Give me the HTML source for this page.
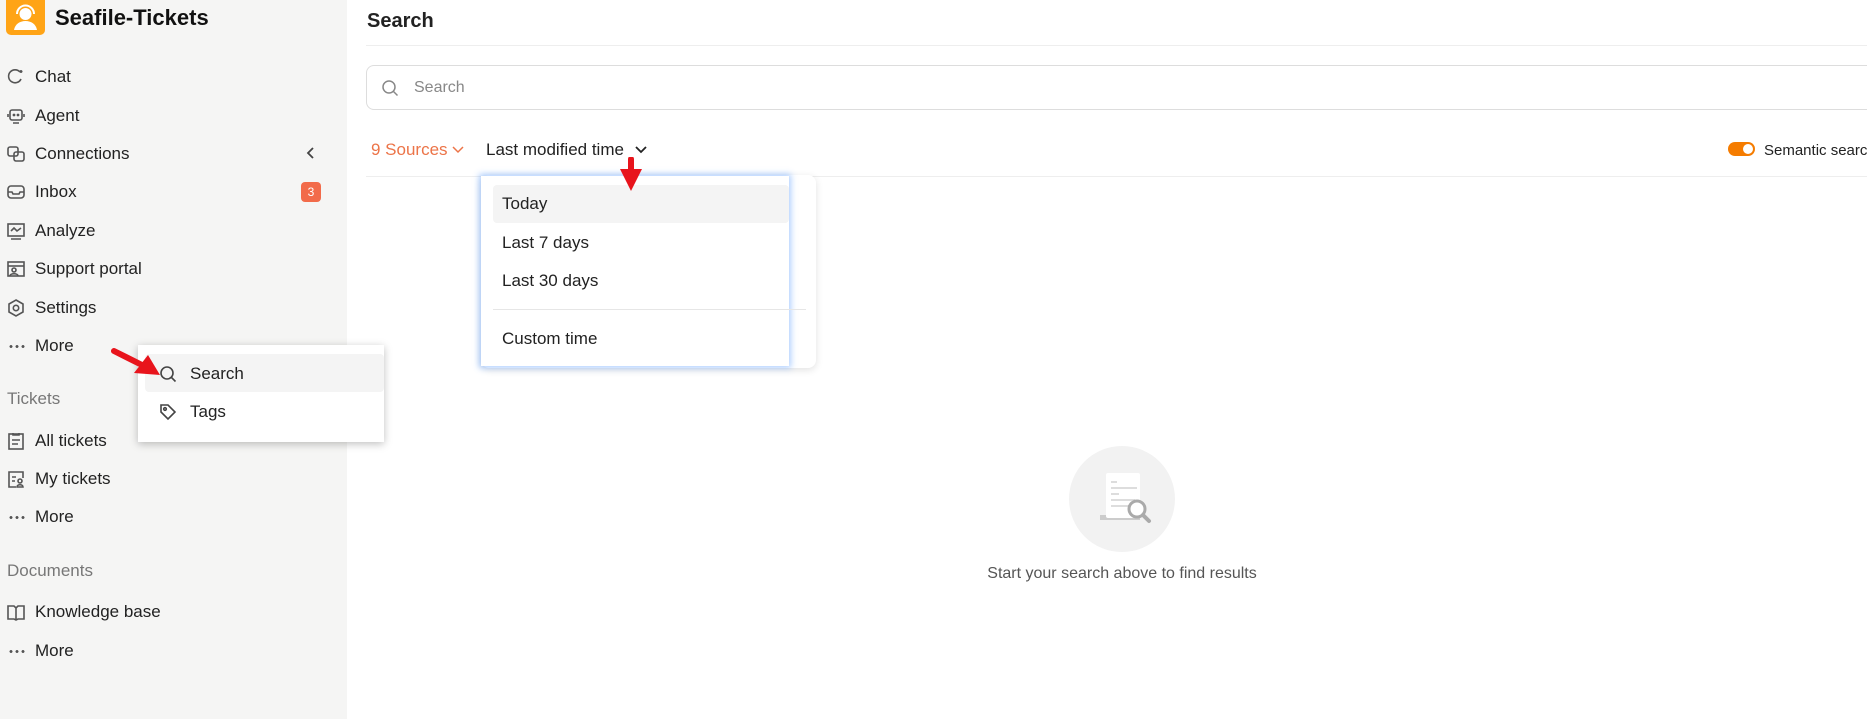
<!DOCTYPE html>
<html><head><meta charset="utf-8"><style>
*{box-sizing:border-box;margin:0;padding:0}
body{width:1867px;height:719px;overflow:hidden;background:#fff;font-family:"Liberation Sans",sans-serif;color:#212529;position:relative}
.side{position:absolute;left:0;top:0;width:347px;height:719px;background:#f5f5f4}
.abs{position:absolute}
.nav{position:absolute;left:0;font-size:17px;color:#222;height:30px;line-height:30px;width:330px}
.nav svg{position:absolute;left:7px;top:6px}
.nav span{position:absolute;left:35px}
.hdr{position:absolute;left:7px;font-size:17px;color:#777}
.dots{position:absolute;left:8px;top:14px;width:18px;height:3px;background:radial-gradient(circle,#555 1.3px,transparent 1.6px) 0 0/6px 3px repeat-x}
.item{position:absolute;font-size:17px;color:#222}
</style></head><body>
<div class="side">
 <div class="abs" style="left:6px;top:0;width:39px;height:35px;background:#ffa416;border-radius:0 0 5px 5px">
  <svg width="39" height="35" viewBox="0 0 39 35"><circle cx="19.5" cy="14" r="6" fill="#fff"/><path d="M11 14a8.5 8.5 0 0 1 17 0" stroke="#fff" stroke-width="2" fill="none"/><path d="M8 30c1-6 6-9 11.5-9s10.5 3 11.5 9z" fill="#fff"/></svg>
 </div>
 <div class="abs" style="left:55px;top:5px;font-size:22px;font-weight:bold;color:#111">Seafile-Tickets</div>

 <div class="nav" style="top:62px"><svg width="18" height="18" viewBox="0 0 18 18" fill="none" stroke="#555" stroke-width="1.6"><path d="M14 11a6.5 6.5 0 1 1-1-7"/><path d="M14 2v3M12.5 3.5h3"/></svg><span>Chat</span></div>
 <div class="nav" style="top:101px"><svg width="18" height="18" viewBox="0 0 18 18" fill="none" stroke="#555" stroke-width="1.6"><rect x="3" y="3" width="12" height="10" rx="2"/><path d="M1 7v3M17 7v3M6 16h6"/><circle cx="7" cy="8" r=".6" fill="#555"/><circle cx="11" cy="8" r=".6" fill="#555"/></svg><span>Agent</span></div>
 <div class="nav" style="top:139px"><svg width="18" height="18" viewBox="0 0 18 18" fill="none" stroke="#555" stroke-width="1.6"><rect x="1" y="2" width="10" height="9" rx="2"/><rect x="7" y="7" width="10" height="9" rx="2"/></svg><span>Connections</span></div>
 <svg class="abs" style="left:305px;top:146px" width="12" height="14" viewBox="0 0 12 14"><path d="M8 2L3 7l5 5" stroke="#444" stroke-width="1.8" fill="none"/></svg>
 <div class="nav" style="top:177px"><svg width="18" height="18" viewBox="0 0 18 18" fill="none" stroke="#555" stroke-width="1.6"><rect x="1" y="3" width="16" height="12" rx="3"/><path d="M1 9h4l1 2h6l1-2h4"/></svg><span>Inbox</span></div>
 <div class="abs" style="left:301px;top:182px;width:20px;height:20px;background:#f26b4a;border-radius:4px;color:#fff;font-size:12px;text-align:center;line-height:20px">3</div>
 <div class="nav" style="top:216px"><svg width="18" height="18" viewBox="0 0 18 18" fill="none" stroke="#555" stroke-width="1.6"><rect x="1" y="2" width="16" height="12"/><path d="M4 9l3-3 3 3 4-3M4 17h10"/></svg><span>Analyze</span></div>
 <div class="nav" style="top:254px"><svg width="18" height="18" viewBox="0 0 18 18" fill="none" stroke="#555" stroke-width="1.6"><rect x="1" y="2" width="16" height="14"/><path d="M1 6h16"/><circle cx="7" cy="10" r="2"/><path d="M3 16c0-3 8-3 8 0"/></svg><span>Support portal</span></div>
 <div class="nav" style="top:293px"><svg width="18" height="18" viewBox="0 0 18 18" fill="none" stroke="#555" stroke-width="1.6"><path d="M9 1l7 4v8l-7 4-7-4V5z"/><circle cx="9" cy="9" r="2.7"/></svg><span>Settings</span></div>
 <div class="nav" style="top:331px"><i class="dots"></i><span>More</span></div>

 <div class="hdr" style="top:389px">Tickets</div>
 <div class="nav" style="top:426px"><svg width="18" height="18" viewBox="0 0 18 18" fill="none" stroke="#555" stroke-width="1.6"><rect x="2" y="2" width="14" height="15"/><path d="M6 1v2h6V1M5 8h8M5 12h6"/></svg><span>All tickets</span></div>
 <div class="nav" style="top:464px"><svg width="18" height="18" viewBox="0 0 18 18" fill="none" stroke="#555" stroke-width="1.6"><path d="M9 17H2V2h14v6"/><path d="M5 7h4M5 11h3"/><circle cx="13" cy="11" r="2"/><path d="M10 17c0-3 6-3 6 0z"/></svg><span>My tickets</span></div>
 <div class="nav" style="top:502px"><i class="dots"></i><span>More</span></div>

 <div class="hdr" style="top:561px">Documents</div>
 <div class="nav" style="top:597px"><svg width="18" height="18" viewBox="0 0 18 18" fill="none" stroke="#555" stroke-width="1.6"><path d="M1 3h6l2 2 2-2h6v13h-6l-2 1-2-1H1zM9 5v12"/></svg><span>Knowledge base</span></div>
 <div class="nav" style="top:636px"><i class="dots"></i><span>More</span></div>
</div>

<!-- popup -->
<div class="abs" style="left:138px;top:345px;width:246px;height:97px;background:#fff;box-shadow:0 2px 8px rgba(0,0,0,.25)">
 <div class="abs" style="left:7px;top:9px;width:239px;height:38px;background:#f4f4f4;border-radius:4px"></div>
 <svg class="abs" style="left:21px;top:20px" width="18" height="18" viewBox="0 0 18 18" fill="none" stroke="#444" stroke-width="1.6"><circle cx="8" cy="8" r="6"/><path d="M12.5 12.5l4 4"/></svg>
 <div class="item" style="left:52px;top:19px">Search</div>
 <svg class="abs" style="left:21px;top:58px" width="18" height="18" viewBox="0 0 18 18" fill="none" stroke="#444" stroke-width="1.6"><path d="M2 2h7l7 7-7 7-7-7z"/><circle cx="6" cy="6" r="1.3"/></svg>
 <div class="item" style="left:52px;top:57px">Tags</div>
</div>
<svg class="abs" style="left:108px;top:343px" width="60" height="40" viewBox="0 0 60 40"><path d="M6 8L38 24" stroke="#e8141c" stroke-width="6" stroke-linecap="round"/><path d="M52 32L26 30 40 12z" fill="#e8141c"/></svg>

<!-- main -->
<div class="abs" style="left:367px;top:10px;font-size:20px;font-weight:bold;color:#222">Search</div>
<div class="abs" style="left:366px;top:45px;width:1501px;height:1px;background:#eee"></div>
<div class="abs" style="left:366px;top:65px;width:1520px;height:45px;border:1px solid #ddd;border-radius:8px"></div>
<svg class="abs" style="left:381px;top:79px" width="18" height="18" viewBox="0 0 18 18" fill="none" stroke="#888" stroke-width="1.5"><circle cx="8" cy="8" r="6"/><path d="M12.5 12.5l4 4"/></svg>
<div class="abs" style="left:414px;top:79px;font-size:16px;color:#888">Search</div>

<div class="abs" style="left:371px;top:140px;font-size:17px;color:#ec7448">9 Sources</div>
<svg class="abs" style="left:451px;top:145px" width="14" height="10" viewBox="0 0 14 10"><path d="M2 2l5 5 5-5" stroke="#ec7448" stroke-width="1.5" fill="none"/></svg>
<div class="abs" style="left:486px;top:140px;font-size:17px;color:#222">Last modified time</div>
<svg class="abs" style="left:634px;top:145px" width="14" height="10" viewBox="0 0 14 10"><path d="M2 2l5 5 5-5" stroke="#222" stroke-width="1.8" fill="none"/></svg>
<div class="abs" style="left:366px;top:176px;width:1501px;height:1px;background:#eee"></div>

<div class="abs" style="left:1728px;top:142px;width:27px;height:14px;background:#f57c00;border-radius:7px"><div class="abs" style="left:15px;top:2px;width:10px;height:10px;border-radius:50%;background:#fff"></div></div>
<div class="abs" style="left:1764px;top:142px;font-size:15px;color:#222;white-space:nowrap">Semantic search</div>

<!-- dropdown -->
<div class="abs" style="left:481px;top:175px;width:335px;height:193px;background:#fff;border-radius:8px;box-shadow:0 2px 8px rgba(0,0,0,.12)"></div>
<div class="abs" style="left:481px;top:176px;width:308px;height:190px;background:#fff;box-shadow:0 0 6px 2px rgba(80,150,255,.45)"></div>
<div class="abs" style="left:493px;top:185px;width:296px;height:38px;background:#f4f4f4;border-radius:4px"></div>
<div class="item" style="left:502px;top:194px">Today</div>
<div class="item" style="left:502px;top:233px">Last 7 days</div>
<div class="item" style="left:502px;top:271px">Last 30 days</div>
<div class="abs" style="left:493px;top:309px;width:313px;height:1px;background:#e6e6e6"></div>
<div class="item" style="left:502px;top:329px">Custom time</div>
<svg class="abs" style="left:618px;top:157px" width="26" height="36" viewBox="0 0 26 36"><path d="M13 2v14" stroke="#e8141c" stroke-width="6" stroke-linecap="round"/><path d="M2 12h22L13 34z" fill="#e8141c"/></svg>

<!-- empty state -->
<div class="abs" style="left:1069px;top:446px;width:106px;height:106px;border-radius:50%;background:#f2f2f2"></div>
<svg class="abs" style="left:1090px;top:470px" width="70" height="60" viewBox="0 0 70 60"><path d="M10 45h40v5H10z" fill="#ccc"/><rect x="16" y="3" width="34" height="45" rx="2" fill="#fff"/><path d="M21 12h6M21 18h26M21 24h8M21 30h24M21 36h22" stroke="#ddd" stroke-width="2"/><circle cx="47" cy="39" r="8" fill="#fff" stroke="#aaa" stroke-width="3"/><path d="M53 45l6 6" stroke="#aaa" stroke-width="4" stroke-linecap="round"/></svg>
<div class="abs" style="left:922px;top:565px;width:400px;text-align:center;font-size:16px;color:#555">Start your search above to find results</div>
</body></html>
